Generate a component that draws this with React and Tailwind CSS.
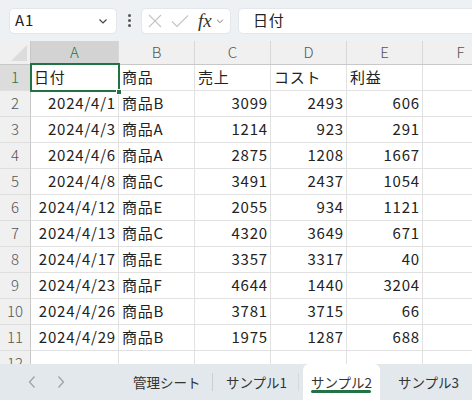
import React from 'react';

const cols = ['A', 'B', 'C', 'D', 'E', 'F'];
const widths = ['w-[88px]', 'w-[76px]', 'w-[76px]', 'w-[76px]', 'w-[76px]', 'w-[76px]'];

const rows = [
  ['日付', '商品', '売上', 'コスト', '利益', ''],
  ['2024/4/1', '商品B', '3099', '2493', '606', ''],
  ['2024/4/3', '商品A', '1214', '923', '291', ''],
  ['2024/4/6', '商品A', '2875', '1208', '1667', ''],
  ['2024/4/8', '商品C', '3491', '2437', '1054', ''],
  ['2024/4/12', '商品E', '2055', '934', '1121', ''],
  ['2024/4/13', '商品C', '4320', '3649', '671', ''],
  ['2024/4/17', '商品E', '3357', '3317', '40', ''],
  ['2024/4/23', '商品F', '4644', '1440', '3204', ''],
  ['2024/4/26', '商品B', '3781', '3715', '66', ''],
  ['2024/4/29', '商品B', '1975', '1287', '688', ''],
  ['', '', '', '', '', ''],
];

const font = { fontFamily: '"Noto Sans CJK JP", "Noto Sans", sans-serif' };

const Chevron = ({ className }) => (
  <svg viewBox="0 0 12 12" className={className} fill="none" stroke="currentColor" strokeWidth="1.2">
    <path d="M2.5 4.5 6 8l3.5-3.5" />
  </svg>
);

export default function App() {
  return (
    <div className="relative h-[400px] w-[472px] overflow-hidden bg-white text-[#222]" style={font}>
      {/* formula bar */}
      <div className="flex h-[41px] items-center bg-[#eef1f4] pl-[9px]">
        <div className="flex h-[26px] w-[108px] items-center justify-between rounded-[5px] border border-[#e3e6ea] bg-white pl-[5px] pr-[7px] text-[15px] tracking-[0.8px]">
          <span>A1</span>
          <Chevron className="h-[12px] w-[12px] text-[#444]" />
        </div>
        <div className="flex w-[24px] flex-col items-center gap-[2px]">
          <span className="h-[3px] w-[3px] rounded-full bg-[#555]" />
          <span className="h-[3px] w-[3px] rounded-full bg-[#555]" />
          <span className="h-[3px] w-[3px] rounded-full bg-[#555]" />
        </div>
        <div className="flex h-[26px] w-[90px] items-center rounded-[5px] border border-[#e3e6ea] bg-white pl-[5px]">
          <svg viewBox="0 0 16 16" className="h-[16px] w-[16px] text-[#c4c4c4]" fill="none" stroke="currentColor" strokeWidth="1.1">
            <path d="M2 2l12 12M14 2 2 14" />
          </svg>
          <svg viewBox="0 0 18 16" className="ml-[8px] h-[16px] w-[18px] text-[#c4c4c4]" fill="none" stroke="currentColor" strokeWidth="1.1">
            <path d="M1 8.5 6 13.5 17 2.5" />
          </svg>
          <span className="ml-[9px] text-[19px] italic leading-none text-[#333]" style={{ fontFamily: '"Liberation Serif", serif' }}>fx</span>
          <Chevron className="ml-[3px] h-[10px] w-[10px] text-[#777]" />
        </div>
        <div className="ml-[7px] flex h-[26px] flex-1 items-center rounded-l-[5px] border border-r-0 border-[#e3e6ea] bg-white pl-[14px] text-[15px] tracking-[0.8px]">
          日付
        </div>
      </div>

      {/* column headers */}
      <div className="flex h-[24px] border-b border-[#c8c8c8] bg-[#f0f0f0]">
        <div className="relative w-[31px] shrink-0 border-r border-[#c8c8c8]">
          <div className="absolute bottom-[3px] right-[3px] h-0 w-0 border-b-[16px] border-l-[16px] border-b-[#dcdcdc] border-l-transparent" />
        </div>
        {cols.map((c, i) => (
          <div
            key={c}
            className={`${widths[i]} flex shrink-0 items-center justify-center border-r border-[#d8d8d8] text-[15px] font-light ${
              i === 0 ? 'bg-[#d3d3d3] text-[#217346]' : 'text-[#555]'
            }`}
          >
            {c}
          </div>
        ))}
      </div>

      {/* rows */}
      {rows.map((r, ri) => (
        <div key={ri} className="flex h-[26px]">
          <div
            className={`flex w-[31px] shrink-0 items-center justify-center border-b border-r border-b-[#dedede] border-r-[#c8c8c8] text-[15px] font-light ${
              ri === 0 ? 'bg-[#dcdcdc] text-[#217346]' : 'bg-[#f0f0f0] text-[#555]'
            }`}
          >
            {ri + 1}
          </div>
          {r.map((v, ci) => {
            const right = ri > 0 && (ci === 0 || (ci >= 2 && ci <= 4));
            return (
              <div
                key={ci}
                className={`${widths[ci]} flex shrink-0 items-center overflow-hidden whitespace-nowrap border-b border-r border-[#e1e1e1] text-[15px] tracking-[0.8px] ${
                  right ? 'justify-end pr-[2px]' : 'pl-[3px]'
                }`}
              >
                {v}
              </div>
            );
          })}
        </div>
      ))}

      {/* selection */}
      <div className="pointer-events-none absolute left-[30px] top-[63px] h-[29px] w-[90px] border-2 border-[#217346]" />
      <div className="pointer-events-none absolute left-[116px] top-[89px] h-[6px] w-[6px] border border-white bg-[#217346]" />

      {/* sheet tabs */}
      <div className="absolute bottom-0 left-0 flex h-[36px] w-[472px] items-stretch overflow-hidden whitespace-nowrap bg-[#e2e8eb] text-[13.5px] text-[#333]">
        <div className="flex w-[119px] shrink-0 items-center gap-[19px] pl-[27px] text-[#9aa0a4]">
          <svg viewBox="0 0 10 14" className="h-[14px] w-[10px]" fill="none" stroke="currentColor" strokeWidth="1.2">
            <path d="M7.5 1.5 2.5 7l5 5.5" />
          </svg>
          <svg viewBox="0 0 10 14" className="h-[14px] w-[10px]" fill="none" stroke="currentColor" strokeWidth="1.2">
            <path d="M2.5 1.5 7.5 7l-5 5.5" />
          </svg>
        </div>
        <div className="flex w-[93px] shrink-0 items-center pl-[14px]">管理シート</div>
        <div className="my-[9px] w-px shrink-0 bg-[#c9cfd2]" />
        <div className="flex w-[85px] shrink-0 items-center pl-[13px]">サンプル1</div>
        <div className="my-[9px] mr-[4px] w-px shrink-0 bg-[#d3d9dc]" />
        <div className="relative flex w-[77px] shrink-0 items-center justify-center rounded-t-[6px] bg-white">
          サンプル2
          <span className="absolute bottom-[7px] left-[8px] h-[3px] w-[60px] rounded-full bg-[#217346]" />
        </div>
        <div className="flex shrink-0 items-center pl-[18px]">サンプル3</div>
      </div>
    </div>
  );
}
